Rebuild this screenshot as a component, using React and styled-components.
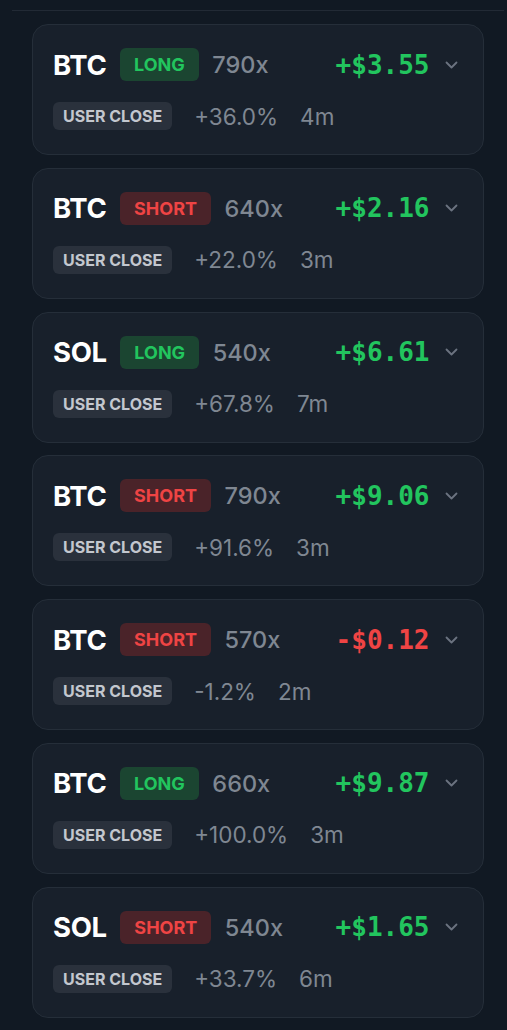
import React from "react";
import styled, { createGlobalStyle } from "styled-components";

const Global = createGlobalStyle`
  html, body { margin: 0; padding: 0; background: #111923; }
  body { font-family: Inter, "Noto Sans", sans-serif; -webkit-font-smoothing: antialiased; }
`;

const Page = styled.div`
  min-height: 1030px;
  background: #111923;
  padding-top: 10px;
  box-sizing: border-box;
`;

const Section = styled.section`
  margin: 0 3px 0 12px;
  border-top: 1px solid #222a35;
  padding: 13px 20px 0 20px;
  display: flex;
  flex-direction: column;
  gap: 12.8px;
`;

const Card = styled.div`
  background: #18202b;
  border: 1px solid #252e39;
  border-radius: 16px;
  padding: 23px 24px 24px 20px;
  display: flex;
  flex-direction: column;
  gap: 21px;
`;

const TopRow = styled.div`
  display: flex;
  align-items: center;
  gap: 13.5px;
  height: 33px;
`;

const Symbol = styled.span`
  font-size: 27.5px;
  font-weight: 700;
  color: #ffffff;
  letter-spacing: -0.3px;
`;

const Side = styled.span`
  height: 33px;
  display: inline-flex;
  align-items: center;
  padding: 0 14px;
  border-radius: 6px;
  font-size: 18px;
  font-weight: 700;
  background: ${(p) => (p.$long ? "#1b4531" : "#4a2329")};
  color: ${(p) => (p.$long ? "#22c55e" : "#ef4444")};
`;

const Lev = styled.span`
  font-size: 23.5px;
  font-weight: 500;
  color: #7f8792;
`;

const Value = styled.span`
  margin-left: auto;
  font-family: "DejaVu Sans Mono", "Liberation Mono", monospace;
  font-weight: 700;
  font-size: 26px;
  color: ${(p) => (p.$neg ? "#ef4444" : "#22c55e")};
`;

const Chevron = styled.svg`
  width: 13px;
  height: 8px;
  margin-left: 2px;
  margin-right: 1px;
  flex: none;
`;

const BottomRow = styled.div`
  display: flex;
  align-items: center;
  gap: 22px;
  height: 28px;
`;

const Reason = styled.span`
  height: 28px;
  display: inline-flex;
  align-items: center;
  padding: 0 10px;
  border-radius: 6px;
  background: #2a313c;
  color: #c3c7ce;
  font-size: 16px;
  font-weight: 700;
`;

const Meta = styled.span`
  font-size: 22.5px;
  color: #7f8792;
`;

const trades = [
  { sym: "BTC", long: true, lev: "790x", val: "+$3.55", pct: "+36.0%", t: "4m" },
  { sym: "BTC", long: false, lev: "640x", val: "+$2.16", pct: "+22.0%", t: "3m" },
  { sym: "SOL", long: true, lev: "540x", val: "+$6.61", pct: "+67.8%", t: "7m" },
  { sym: "BTC", long: false, lev: "790x", val: "+$9.06", pct: "+91.6%", t: "3m" },
  { sym: "BTC", long: false, lev: "570x", val: "-$0.12", pct: "-1.2%", t: "2m", neg: true },
  { sym: "BTC", long: true, lev: "660x", val: "+$9.87", pct: "+100.0%", t: "3m" },
  { sym: "SOL", long: false, lev: "540x", val: "+$1.65", pct: "+33.7%", t: "6m" },
];

export default function App() {
  return (
    <>
      <Global />
      <Page>
        <Section>
          {trades.map((tr, i) => (
            <Card key={i}>
              <TopRow>
                <Symbol>{tr.sym}</Symbol>
                <Side $long={tr.long}>{tr.long ? "LONG" : "SHORT"}</Side>
                <Lev>{tr.lev}</Lev>
                <Value $neg={tr.neg}>{tr.val}</Value>
                <Chevron viewBox="0 0 13 8" fill="none" stroke="#6b7380" strokeWidth="1.8" strokeLinecap="round" strokeLinejoin="round">
                  <path d="M1.5 1.5l5 5 5-5" />
                </Chevron>
              </TopRow>
              <BottomRow>
                <Reason>USER CLOSE</Reason>
                <Meta>{tr.pct}</Meta>
                <Meta>{tr.t}</Meta>
              </BottomRow>
            </Card>
          ))}
        </Section>
      </Page>
    </>
  );
}
